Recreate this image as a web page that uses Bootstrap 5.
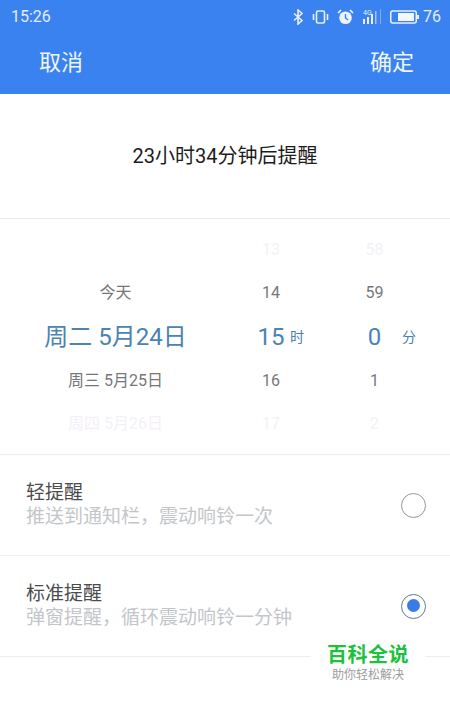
<!doctype html>
<html lang="zh-CN">
  <head>
    <meta charset="UTF-8" />
    <meta name="viewport" content="width=device-width, initial-scale=1.0" />
    <title>提醒</title>
    <link
      href="https://cdn.jsdelivr.net/npm/bootstrap@5.3.0/dist/css/bootstrap.min.css"
      rel="stylesheet"
    />
    <style>
      body {
        font-family: Roboto, "Noto Sans CJK SC", sans-serif;
        width: 450px;
        height: 711px;
        overflow: hidden;
        background-color: #fff;
        position: relative;
      }

      .top-head {
        background-color: #3b82f1;
        height: 94px;
        color: #fff;
      }

      .status-row {
        height: 33px;
        padding: 0 9px 0 11px;
        font-size: 16px;
        color: #e4eefc;
      }

      .action-row {
        height: 61px;
        padding: 0 36px 3px 39px;
        font-size: 22px;
        color: #eef6fd;
      }

      .count-title {
        height: 125px;
        font-size: 20px;
        color: #1c1c1c;
        padding-bottom: 1px;
        border-bottom: 1px solid #e9e9ec;
      }

      .picker {
        height: 236px;
        padding-top: 9px;
        border-bottom: 1px solid #ececee;
      }

      .pick-col {
        display: flex;
        flex-direction: column;
      }

      .col-date { width: 231px; }
      .col-hour { width: 80px; margin-left: 0; }
      .col-min { width: 127px; }

      .pick-cell {
        height: 43.6px;
        display: flex;
        align-items: center;
        justify-content: center;
        font-size: 16px;
        color: #77777b;
        white-space: nowrap;
      }

      .pick-cell.faded { color: #f4f1f6; }

      .pick-cell.now {
        color: #4a83b4;
        font-size: 24px;
        position: relative;
      }

      .unit-tag {
        position: absolute;
        font-size: 14px;
        color: #4a7fae;
        top: 12px;
      }

      .col-hour .unit-tag { left: 59px; }
      .col-min .unit-tag { left: 91px; }

      .remind-row {
        height: 101px;
        padding: 0 24px 0 26px;
        border-bottom: 1px solid #efeef1;
      }

      .remind-row.last-row { border-bottom-color: #f1eaf3; }

      .remind-name {
        font-size: 19px;
        line-height: 24px;
        color: #4b4b4e;
      }

      .remind-note {
        font-size: 19px;
        line-height: 24px;
        color: #c3c6c9;
      }

      .radio-mark {
        width: 25px;
        height: 25px;
        border-radius: 50%;
        border: 1.5px solid #98929e;
      }

      .radio-mark.on {
        border-color: #5b7aa6;
        padding: 4.5px;
      }

      .radio-mark.on span {
        display: block;
        width: 13px;
        height: 13px;
        border-radius: 50%;
        background-color: #3b7be8;
      }

      .site-mark {
        position: absolute;
        right: 25px;
        top: 640px;
        width: 114px;
        height: 48px;
        background-color: #fff;
        text-align: center;
      }

      .site-name {
        font-size: 20px;
        line-height: 26px;
        margin-top: 2px;
        font-weight: 700;
        color: #1cc13c;
        letter-spacing: 0.5px;
      }

      .site-sub {
        font-size: 12px;
        line-height: 15px;
        color: #9b9b9b;
      }
    </style>
  </head>

  <body>
    <div class="top-head">
      <div class="status-row d-flex align-items-center justify-content-between">
        <span>15:26</span>
        <div class="d-flex align-items-center">
          <!-- bluetooth -->
          <svg width="12" height="16" viewBox="0 0 12 16" fill="none" stroke="#e8f0fd" stroke-width="1.6">
            <path d="M2 4.5l8 7-4 3.5V1l4 3.5-8 7" />
          </svg>
          <!-- vibrate -->
          <svg class="ms-2" width="17" height="16" viewBox="0 0 17 16" fill="none" stroke="#e8f0fd" stroke-width="1.6">
            <rect x="4.5" y="2" width="8" height="12" rx="1.5" />
            <path d="M1.5 5v6M15.5 5v6" />
          </svg>
          <!-- alarm -->
          <svg class="ms-2" width="17" height="16" viewBox="0 0 17 16">
            <circle cx="8.5" cy="8.7" r="6.3" fill="#eef4fe" />
            <path d="M8.5 5v4l2.6 2" fill="none" stroke="#3b82f1" stroke-width="1.4" />
            <path d="M1 4l3-3M16 4l-3-3" stroke="#eef4fe" stroke-width="1.6" />
          </svg>
          <!-- signal -->
          <svg class="ms-2" width="20" height="17" viewBox="0 0 20 17">
            <g fill="#e8f0fd">
              <rect x="1" y="11" width="2" height="5" />
              <rect x="5" y="9" width="2" height="7" />
              <rect x="9" y="6" width="2" height="10" />
              <rect x="13" y="3" width="1.5" height="13" opacity="0.6" />
              <rect x="18" y="1" width="1" height="15" opacity="0.4" />
            </g>
            <text x="1" y="6.5" font-size="7" fill="#e8f0fd" font-family="Roboto, sans-serif">4G</text>
          </svg>
          <!-- battery -->
          <svg class="ms-2" width="29" height="14" viewBox="0 0 29 14">
            <rect x="0.75" y="1" width="25.5" height="12" rx="2" fill="none" stroke="#e8f0fd" stroke-width="1.5" />
            <rect x="8" y="3" width="16" height="8" fill="#f4f7fe" />
            <rect x="27" y="5" width="2" height="4" fill="#e8f0fd" />
          </svg>
          <span class="ms-1">76</span>
        </div>
      </div>
      <div class="action-row d-flex align-items-center justify-content-between">
        <span>取消</span>
        <span>确定</span>
      </div>
    </div>

    <div class="count-title d-flex align-items-center justify-content-center">23小时34分钟后提醒</div>

    <div class="picker d-flex">
      <div class="pick-col col-date">
        <div class="pick-cell faded"></div>
        <div class="pick-cell">今天</div>
        <div class="pick-cell now">周二 5月24日</div>
        <div class="pick-cell">周三 5月25日</div>
        <div class="pick-cell faded">周四 5月26日</div>
      </div>
      <div class="pick-col col-hour">
        <div class="pick-cell faded">13</div>
        <div class="pick-cell">14</div>
        <div class="pick-cell now">15<span class="unit-tag">时</span></div>
        <div class="pick-cell">16</div>
        <div class="pick-cell faded">17</div>
      </div>
      <div class="pick-col col-min">
        <div class="pick-cell faded">58</div>
        <div class="pick-cell">59</div>
        <div class="pick-cell now">0<span class="unit-tag">分</span></div>
        <div class="pick-cell">1</div>
        <div class="pick-cell faded">2</div>
      </div>
    </div>

    <div class="remind-row d-flex align-items-center justify-content-between">
      <div>
        <div class="remind-name">轻提醒</div>
        <div class="remind-note">推送到通知栏，震动响铃一次</div>
      </div>
      <div class="radio-mark"></div>
    </div>
    <div class="remind-row last-row d-flex align-items-center justify-content-between">
      <div>
        <div class="remind-name">标准提醒</div>
        <div class="remind-note">弹窗提醒，循环震动响铃一分钟</div>
      </div>
      <div class="radio-mark on"><span></span></div>
    </div>

    <div class="site-mark">
      <div class="site-name">百科全说</div>
      <div class="site-sub">助你轻松解决</div>
    </div>

    <script src="https://cdn.jsdelivr.net/npm/bootstrap@5.3.0/dist/js/bootstrap.bundle.min.js"></script>
  </body>
</html>
